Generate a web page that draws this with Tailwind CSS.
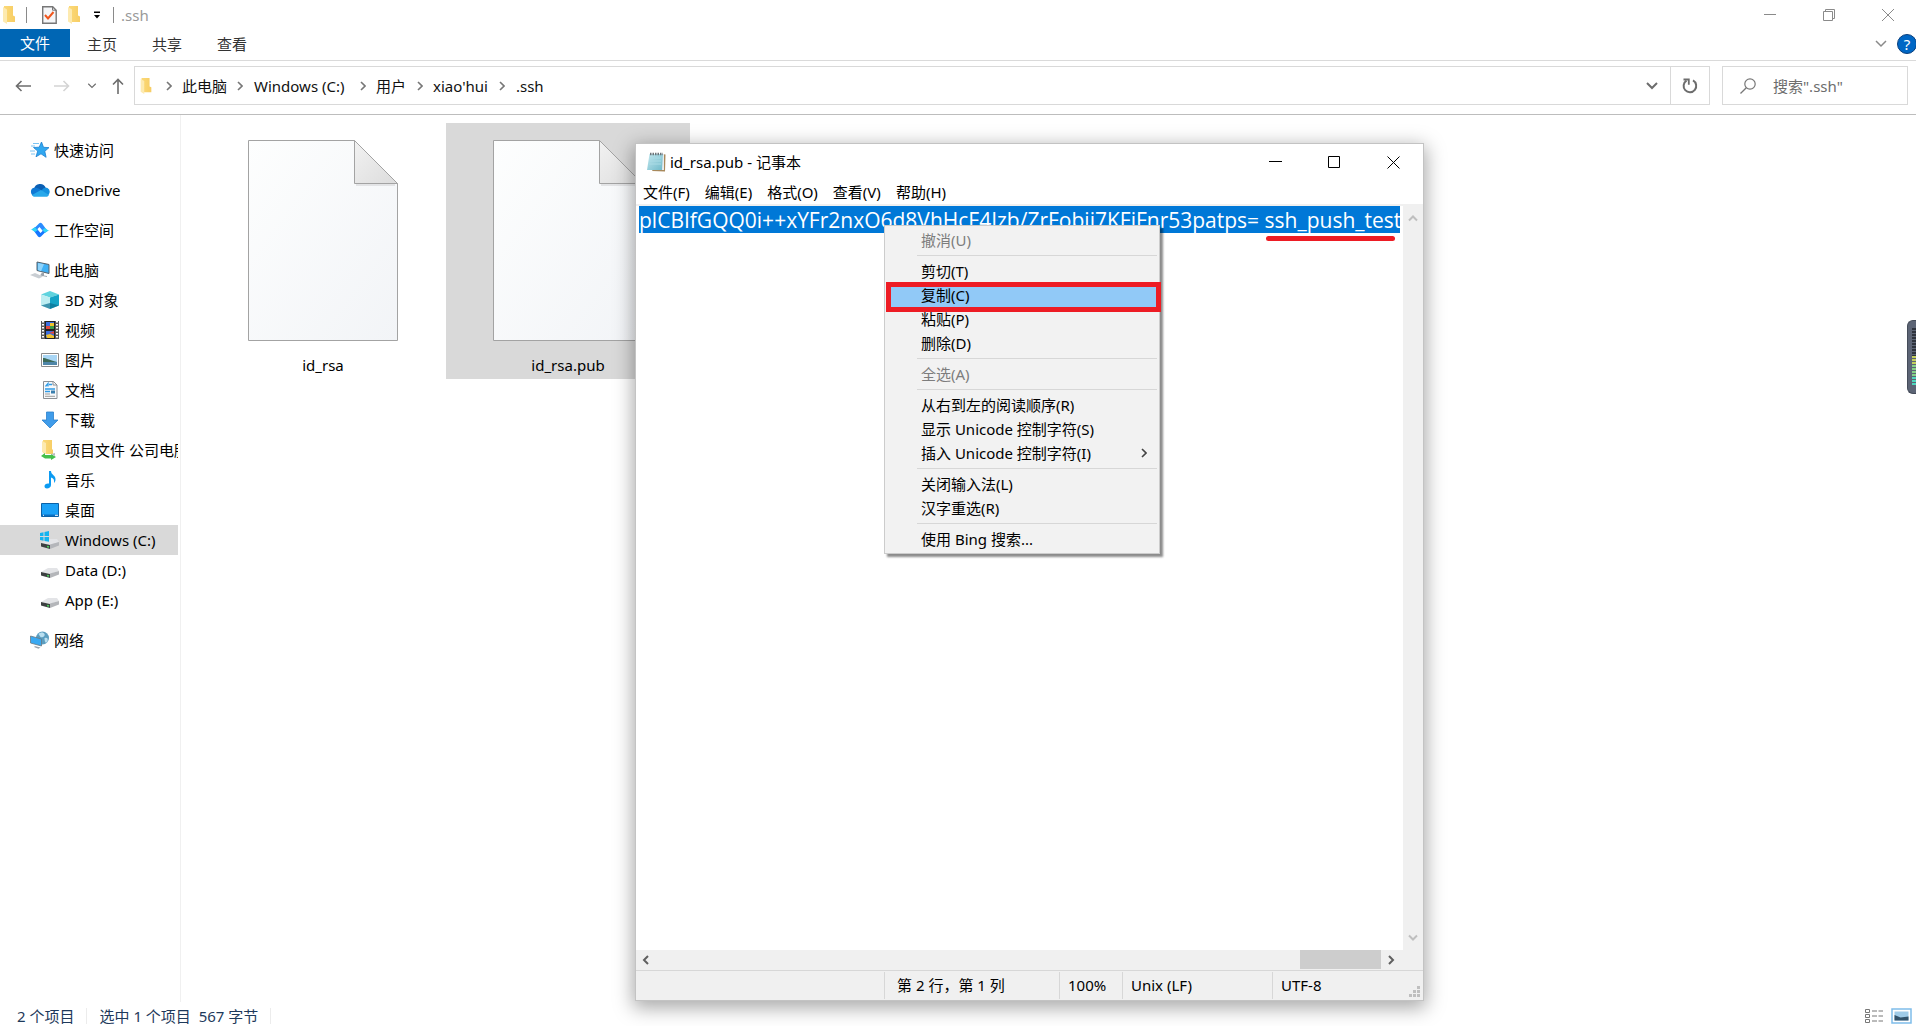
<!DOCTYPE html>
<html lang="zh-CN">
<head>
<meta charset="utf-8">
<meta name="viewport" content="width=device-width, initial-scale=1">
<title>.ssh</title>
<script src="https://cdn.jsdelivr.net/npm/@tailwindcss/browser@4"></script>
</head>
<body class="relative flex h-screen flex-col overflow-hidden bg-white font-['Noto_Sans','Noto_Sans_CJK_SC',sans-serif] text-[15px] leading-6 text-black">

<svg class="absolute size-0" aria-hidden="true">
  <defs>
    <linearGradient id="gFolder" x1="0" x2="1"><stop offset="0" stop-color="#fbd978"/><stop offset="1" stop-color="#f7cd64"/></linearGradient>
    <linearGradient id="gPaper" x1="0" y1="0" x2="1" y2="1"><stop offset="0" stop-color="#fdfefe"/><stop offset="1" stop-color="#f2f4f7"/></linearGradient>
    <linearGradient id="gFold" x1="0" y1="0" x2="1" y2="1"><stop offset="0" stop-color="#f2f2f2"/><stop offset="1" stop-color="#dcdcdc"/></linearGradient>
    <linearGradient id="gPad" x1="0" y1="0" x2="1" y2="1"><stop offset="0" stop-color="#c3e8ef"/><stop offset="1" stop-color="#6fb9c9"/></linearGradient>
    <symbol id="folder" viewBox="0 0 12 18"><path d="M1 0h9v9.500l2 1V16H4L1 15z" fill="url(#gFolder)"/><path d="M0 1l4 2.500V18L0 15.500z" fill="#fdeab0"/></symbol>
    <symbol id="chev" viewBox="0 0 6 10"><path d="M1 1l4 4-4 4" fill="none" stroke="currentColor" stroke-width="1.600"/></symbol>
    <symbol id="down" viewBox="0 0 12 8"><path d="M1 1l5 5 5-5" fill="none" stroke="currentColor" stroke-width="1.500"/></symbol>
    <symbol id="drive" viewBox="0 0 18 10"><path d="M0 4L7 0h9l2 3-9 3z" fill="#e3e4e7"/><path d="M9 5.500L18 3v3.500L9 10z" fill="#b4b6ba"/><path d="M0 4l9 2v4L0 7.500z" fill="#3c3f41"/><path d="M6 7.500l2 .5" stroke="#4cd05a" stroke-width="1.500"/></symbol>
    <symbol id="page" viewBox="0 0 150 201">
      <path d="M.5.500h106l43 43v157H.5z" fill="url(#gPaper)" stroke="#a3a3a3"/>
      <path d="M108 45h39" stroke="#e3e4e6" stroke-width="2"/>
      <path d="M106.500.500v43h43z" fill="url(#gFold)" stroke="#a3a3a3"/>
    </symbol>
  </defs>
</svg>

<!-- Title bar -->
<header class="flex h-[29px] shrink-0 items-center">
  <svg class="ml-[3px] h-[18px] w-3"><use href="#folder"/></svg>
  <span class="ml-[11px] h-4 w-px bg-[#8a8a8a]"></span>
  <button class="ml-[15px]" aria-label="属性">
    <svg class="h-[18px] w-[15px]" viewBox="0 0 15 18"><path d="M.7.700h10l3.500 3.500v13H.7z" fill="#f5f6f8" stroke="#777" stroke-width="1.400"/><path d="M10.500.700v3.500h3.500" fill="none" stroke="#777"/><path d="M3 9l3 3.500L11.500 6" fill="none" stroke="#f0561d" stroke-width="2"/></svg>
  </button>
  <button class="ml-[11px]" aria-label="新建文件夹"><svg class="h-[18px] w-3"><use href="#folder"/></svg></button>
  <button class="ml-[13px]" aria-label="自定义快速访问工具栏"><svg class="h-2 w-2" viewBox="0 0 8 8"><path d="M1 0.500h6v1.500H1zM1 4h6L4 7.500z"/></svg></button>
  <span class="ml-3 h-4 w-px bg-[#8a8a8a]"></span>
  <h1 class="ml-[7px] text-[#999]">.ssh</h1>
  <div class="ml-auto mr-[22px] flex items-center gap-[47px] text-[#8a8a8a]">
    <button aria-label="最小化"><svg class="size-3" viewBox="0 0 12 12"><path d="M0 5.500h12" stroke="currentColor"/></svg></button>
    <button aria-label="还原"><svg class="size-3" viewBox="0 0 12 12"><path d="M.5 2.500h9v9h-9zM2.500 2.500v-2h9v9h-2" fill="none" stroke="currentColor"/></svg></button>
    <button aria-label="关闭"><svg class="size-3" viewBox="0 0 12 12"><path d="M0 0l12 12M12 0L0 12" stroke="currentColor"/></svg></button>
  </div>
</header>

<!-- Ribbon tabs -->
<nav class="flex h-8 shrink-0 items-start border-b border-[#dadada] text-[#333]">
  <button class="h-7 w-[70px] bg-[#0066b4] text-white">文件</button>
  <button class="ml-[17px] h-[30px]">主页</button>
  <button class="ml-[35px] h-[30px]">共享</button>
  <button class="ml-[35px] h-[30px]">查看</button>
  <div class="-mr-px ml-auto flex h-[30px] items-center gap-2.5">
    <button class="text-[#8a8a8a]" aria-label="展开功能区"><svg class="h-2 w-3"><use href="#down"/></svg></button>
    <button class="size-5 rounded-full border border-[#0a3f7d] bg-[#0067c5] text-[15px] leading-[18px] text-white" aria-label="帮助">?</button>
  </div>
</nav>

<!-- Address row -->
<div class="flex h-[54px] shrink-0 items-start border-b border-[#bdbdbd] pr-2 pt-[5px]">
  <div class="flex h-[39px] w-[134px] shrink-0 items-center pl-[15px] text-[#6d6d6d]">
    <button aria-label="后退"><svg class="h-3 w-4" viewBox="0 0 16 12"><path d="M6.500 1L1.500 6l5 5M1.500 6H16" fill="none" stroke="currentColor" stroke-width="1.600"/></svg></button>
    <button class="ml-[23px] text-[#d4d4d4]" aria-label="前进"><svg class="h-3 w-4" viewBox="0 0 16 12"><path d="M9.500 1l5 5-5 5M14.500 6H0" fill="none" stroke="currentColor" stroke-width="1.600"/></svg></button>
    <button class="ml-[17px]" aria-label="最近位置"><svg class="h-1.5 w-2.5"><use href="#down"/></svg></button>
    <button class="ml-[15px]" aria-label="向上"><svg class="h-4 w-3" viewBox="0 0 12 16"><path d="M1 6.500L6 1.500l5 5M6 1.500V16" fill="none" stroke="currentColor" stroke-width="1.600"/></svg></button>
  </div>
  <div class="flex h-[39px] grow items-stretch border border-[#d9d9d9]">
    <nav class="flex grow items-center pl-[5px] text-[#111]" aria-label="路径">
      <svg class="h-4 w-3"><use href="#folder"/></svg>
      <svg class="ml-[14px] h-2.5 w-1.5 text-[#777]"><use href="#chev"/></svg>
      <a href="#pc" class="ml-[10px]">此电脑</a>
      <svg class="ml-[10px] h-2.5 w-1.5 text-[#777]"><use href="#chev"/></svg>
      <a href="#c" class="ml-[11px] w-[95px]">Windows (C:)</a>
      <svg class="ml-[11px] h-2.5 w-1.5 text-[#777]"><use href="#chev"/></svg>
      <a href="#users" class="ml-[10px]">用户</a>
      <svg class="ml-[11px] h-2.5 w-1.5 text-[#777]"><use href="#chev"/></svg>
      <a href="#home" class="ml-[10px]">xiao'hui</a>
      <svg class="ml-[11px] h-2.5 w-1.5 text-[#777]"><use href="#chev"/></svg>
      <a href="#ssh" class="ml-[11px]">.ssh</a>
    </nav>
    <button class="px-3 text-[#6d6d6d]" aria-label="以前的位置"><svg class="h-2 w-3" viewBox="0 0 12 8"><path d="M1 1l5 5 5-5" fill="none" stroke="currentColor" stroke-width="2"/></svg></button>
    <button class="flex w-[39px] items-center justify-center border-l border-[#d9d9d9] text-[#6d6d6d]" aria-label="刷新"><svg class="h-4 w-4" viewBox="0 0 16 16"><path d="M4.500 2.600a6.300 6.300 0 1 0 6.500-.2" fill="none" stroke="currentColor" stroke-width="2"/><path d="M1.500 1.500h5.300v5.300" fill="none" stroke="currentColor" stroke-width="1.800"/></svg></button>
  </div>
  <label class="ml-3 flex h-[39px] w-[186px] shrink-0 items-center border border-[#d9d9d9] pl-[17px]">
    <svg class="size-4 shrink-0" viewBox="0 0 16 16"><circle cx="10" cy="6" r="5.200" fill="none" stroke="#777" stroke-width="1.200"/><path d="M6.300 9.700L.500 15.500" stroke="#777" stroke-width="1.300"/></svg>
    <input type="search" aria-label="搜索" placeholder='搜索".ssh"' class="ml-[17px] w-full min-w-0 bg-transparent text-[15px] outline-none placeholder:text-[#6d6d6d]">
  </label>
</div>

<main class="flex min-h-0 grow">
  <!-- Navigation pane -->
  <nav class="flex w-[181px] shrink-0 flex-col gap-2.5 border-r border-[#f0f0f0] pr-0.5 pt-5" aria-label="导航窗格">
    <a href="#quick" class="flex h-[30px] items-center gap-1 pl-[30px]">
      <svg class="h-[18px] w-5" viewBox="0 0 20 18"><path d="M11.500 1l2 5.300 5.500.3-4.200 3.700 1.300 6-5.100-3.500-5 3 1.700-5.700L3.500 6.500l5.700-.3z" fill="#31a8f0" stroke="#1a7fd0" stroke-width=".8"/><path d="M3 2.500h6M1 5h4M0 10h5M1 13h4" stroke="#7cc4f2"/></svg>快速访问</a>
    <a href="#onedrive" class="flex h-[30px] items-center gap-1 pl-[30px]">
      <svg class="h-[14px] w-5" viewBox="0 0 20 14"><path d="M4 6a6.200 6.200 0 0 1 11.800-1.300L12 9z" fill="#0a5fb4"/><path d="M4 4.800C6 4.300 8 5 9.500 6L14 9l-3 4H4.500A4.200 4.200 0 0 1 4 4.800z" fill="#0f78d4"/><path d="M12 7c1-2 4-2.800 5.500-2A4.300 4.300 0 0 1 16 13h-5z" fill="#1490df"/><path d="M2 12l9-5 8 5c-.800 1.300-2 1.800-3 1.800H4.500C3.500 13.800 2.500 13 2 12z" fill="#28a8ea"/></svg>OneDrive</a>
    <a href="#workspace" class="flex h-[30px] items-center gap-1 pl-[30px]">
      <svg class="h-4 w-5" viewBox="0 0 19 16"><path d="M2 7l3-2 5 6 3-3 2 2-4.500 4.500c-1 1-2 1-3 0z" fill="#1677ff"/><path d="M17 9l-3 2-5-6-3 3-2-2L8.500 1.500c1-1 2-1 3 0z" fill="#2b8cff"/><path d="M0 7.500C2 7.500 3 5.500 4.500 5.200L7 8.300 4.500 10C3 9 1.500 7.500 0 7.500zM19 8.500c-2 0-3 2-4.500 2.300L12 7.700 14.500 6C16 7 17.500 8.500 19 8.500z" fill="#2fd4f7"/></svg>工作空间</a>
    <div>
      <a href="#pc" class="flex h-[30px] items-center gap-1 pl-[30px]">
        <svg class="h-[18px] w-5" viewBox="0 0 20 18"><path d="M7 1l12 2.500v9L7 9.500z" fill="#3fb0f5" stroke="#56616b"/><path d="M8 2l6 1.300-3 7L8 9z" fill="#8ed3fb"/><path d="M12 11.500l2 .5v2.500l3 .5v1l-7-1.500z" fill="#9aa3ab"/><path d="M0 14l5-2 8 3.500-4 2z" fill="#c9ced3"/></svg>此电脑</a>
      <a href="#3d" class="flex h-[30px] items-center gap-1.5 pl-[41px]">
        <svg class="size-[18px]" viewBox="0 0 18 18"><path d="M0 3.500L9 0l9 3.500-9 3z" fill="#5fd3de"/><path d="M0 3.500l9 3V18l-9-3.500z" fill="#bdeef2"/><path d="M18 3.500l-9 3V18l9-3.500z" fill="#14a4c6"/><path d="M0 14.500l9-2.500 9 2.500L9 18z" fill="#0a6f92" fill-opacity=".7"/></svg>3D 对象</a>
      <a href="#videos" class="flex h-[30px] items-center gap-1.5 pl-[41px]">
        <svg class="size-[18px]" viewBox="0 0 18 18"><path d="M0 0h18v18H0z" fill="#5a5a5a"/><path d="M2 0v18M16 0v18" stroke="#fff" stroke-width="2" stroke-dasharray="1.500 1.500"/><path d="M4 0h10v18H4z" fill="#222"/><path d="M5 1h8v7H5zM5 10h8v7H5z" fill="#3c6fe0"/><path d="M5 5h4v3H5zM8 12l5-2v3z" fill="#e2483f"/><path d="M9 2h4v3H9zM5 14l4-1 4 2v2H6z" fill="#f2c32e"/><path d="M9 5h4v3H9z" fill="#3c9b4b"/></svg>视频</a>
      <a href="#pictures" class="flex h-[30px] items-center gap-1.5 pl-[41px]">
        <svg class="h-[14px] w-[18px]" viewBox="0 0 18 14"><path d="M.5.500h17v13H.5z" fill="#fff" stroke="#8b8b8b"/><path d="M2 2h14v10H2z" fill="#a9d6f5"/><path d="M2 5c3 0 6 2 14 4v1H2z" fill="#3d6a58"/><path d="M2 9h14v3H2z" fill="#4f86a8"/></svg>图片</a>
      <a href="#documents" class="flex h-[30px] items-center gap-1.5 pl-[41px]">
        <svg class="size-[18px]" viewBox="0 0 18 18"><path d="M2.500.500h10l3.500 3.500v13.500H2.500z" fill="#f7f9fb" stroke="#8a8f94"/><path d="M12 .5V4h4" fill="none" stroke="#8a8f94"/><path d="M4.500 5.500L7 2.500v3M8 3.500h3M4 8h10M4 10.500h5" stroke="#2f9be6" stroke-width="1.300" fill="none"/><path d="M10 9.500h4v3h-4z" fill="#3a7fae"/><path d="M4 13h5M4 15.300h10" stroke="#9b9b9b"/></svg>文档</a>
      <a href="#downloads" class="flex h-[30px] items-center gap-1.5 pl-[41px]">
        <svg class="size-[18px]" viewBox="0 0 18 18"><path d="M5.500 1h7v8H17l-8 8-8-8h4.500z" fill="#3f9cea" stroke="#2c80cc" stroke-width=".8"/></svg>下载</a>
      <a href="#project" class="flex h-[30px] items-center gap-1.5 overflow-hidden pl-[41px] whitespace-nowrap">
        <svg class="h-5 w-[18px] shrink-0" viewBox="0 0 18 20"><path d="M2 0h9v9l1 1v4H5l-3-1z" fill="url(#gFolder)"/><path d="M1 1l4 2v11l-4-2z" fill="#fdeab0"/><path d="M0 16l4-3v2h6v-1l5 3-5 3v-1.500H4z" fill="#45c04c"/><path d="M10 14l4-1v3z" fill="#b8bcc0"/></svg>项目文件 公司电脑</a>
      <a href="#music" class="flex h-[30px] items-center gap-1.5 pl-[41px]">
        <svg class="size-[18px]" viewBox="0 0 18 18"><path d="M8 0h2c0 4 5 4 4.500 9-.2 1.500-1 2.500-1.500 3 .5-3-.5-5-3-5.500V14c0 2-2 3.500-4 3.500S3.500 16.500 3.500 15 5.500 12 8 12.500z" fill="#0c9bf2"/></svg>音乐</a>
      <a href="#desktop" class="flex h-[30px] items-center gap-1.5 pl-[41px]">
        <svg class="h-[14px] w-[18px]" viewBox="0 0 18 14"><path d="M.5.500h17v13H.5z" fill="#1ba1f7" stroke="#0b62a8"/><path d="M1 11.500h16V13H1z" fill="#0b6fc2"/><path d="M2 12.300h1M14 12.300h3" stroke="#fff"/></svg>桌面</a>
      <a href="#c" class="flex h-[30px] items-center gap-1.5 bg-[#d9d9d9] pl-10" aria-current="true">
        <svg class="h-[18px] w-[19px] shrink-0" viewBox="0 0 19 18"><svg x="1" y="8" width="18" height="10" viewBox="0 0 18 10"><use href="#drive"/></svg><path d="M0 2l3.500-.7V5H0zM4.500 1L9 0v5H4.500zM0 6h3.500v3.700L0 9zM4.500 6H9v4.700L4.500 10z" fill="#14b4f0"/></svg>Windows (C:)</a>
      <a href="#d" class="flex h-[30px] items-center gap-1.5 pl-[41px]"><svg class="mt-1.5 h-2.5 w-[18px]"><use href="#drive"/></svg>Data (D:)</a>
      <a href="#e" class="flex h-[30px] items-center gap-1.5 pl-[41px]"><svg class="mt-1.5 h-2.5 w-[18px]"><use href="#drive"/></svg>App (E:)</a>
    </div>
    <a href="#network" class="flex h-[30px] items-center gap-1 pl-[30px]">
      <svg class="h-[18px] w-5" viewBox="0 0 19 18"><circle cx="12" cy="7" r="6.500" fill="#5b9dbf"/><path d="M8 3c2-2 5-2 6 0s-2 4-4 3zM14 7c2-1 4 0 3 3s-3 2-3-3z" fill="#b9dff0"/><path d="M0 5l11 3v7L0 12z" fill="#39a9f2" stroke="#6a7882" stroke-width=".8"/><path d="M4 15l6 1.500-2 1.300-4-1.500z" fill="#9aa3ab"/></svg>网络</a>
  </nav>

  <!-- Files -->
  <section class="flex grow items-start gap-px pl-5 pt-2" aria-label="文件">
    <button class="flex h-64 w-[244px] flex-col items-center pt-[17px]">
      <svg class="h-[201px] w-[150px]"><use href="#page"/></svg>
      <span class="mt-3">id_rsa</span>
    </button>
    <button class="flex h-64 w-[244px] flex-col items-center bg-[#d9d9d9] pt-[17px]" aria-pressed="true">
      <svg class="h-[201px] w-[150px]"><use href="#page"/></svg>
      <span class="mt-3">id_rsa.pub</span>
    </button>
  </section>
</main>

<footer class="flex h-6 shrink-0 items-center gap-3 pl-[17px] pt-[3px] text-[#1e395b]">
  <span>2 个项目</span>
  <span class="h-4 w-px bg-[#ececec]"></span>
  <span class="whitespace-pre">选中 1 个项目  567 字节</span>
  <span class="h-4 w-px bg-[#ececec]"></span>
  <div class="ml-auto flex items-center gap-2 pr-1">
    <button class="h-4" aria-label="详细信息"><svg class="h-4 w-[18px]" viewBox="0 0 18 16"><path d="M.5 1.500h4v3h-4zM.5 6.500h4v3h-4zM.5 11.500h4v3h-4z" fill="none" stroke="#777"/><path d="M7 3h5M13.500 3H18M7 8h5M13.500 8H18M7 13h5M13.500 13H18" stroke="#777"/></svg></button>
    <button class="h-4" aria-label="大图标"><svg class="h-4 w-[21px]" viewBox="0 0 21 16"><path d="M1 1h19v14H1z" fill="#fff" stroke="#7fbdea" stroke-width="1.500"/><path d="M3.500 3.500h14v9h-14z" fill="#9fcbe8"/><path d="M3.500 7l6 2.500 8-1v4h-14z" fill="#33536b"/></svg></button>
  </div>
</footer>

<!-- Notepad window -->
<section class="absolute left-[635px] top-[143px] flex h-[858px] w-[789px] flex-col border border-[#c3c3c3] bg-white shadow-[0_5px_18px_2px_rgba(0,0,0,0.34)]" aria-label="记事本">
  <header class="flex h-9 shrink-0 items-center pl-[10px]">
    <svg class="h-5 w-5" viewBox="0 0 20 20"><path d="M16 2l3.500.5-.5 17-13-.5z" fill="#a8895c"/><path d="M4 2h14v16H2z" fill="#e8ecee"/><path d="M3.500 2H17l-1 16H1z" fill="url(#gPad)"/><path d="M4 6h11M3.500 9H15M3 12h12" stroke="#a9dbe5"/><path d="M4 2h13" stroke="#6c7378" stroke-width="2.500" stroke-dasharray="1.500 1"/></svg>
    <h2 class="ml-1">id_rsa.pub - 记事本</h2>
    <div class="ml-auto mr-[23px] flex items-center gap-[46px]">
      <button aria-label="最小化"><svg class="size-[13px]" viewBox="0 0 13 13"><path d="M0 5.500h13" stroke="#000"/></svg></button>
      <button aria-label="最大化"><svg class="size-[13px]" viewBox="0 0 13 13"><path d="M.5.500h11v11H.5z" fill="none" stroke="#000"/></svg></button>
      <button aria-label="关闭"><svg class="size-[13px]" viewBox="0 0 13 13"><path d="M.5.500l12 12M12.500.500l-12 12" stroke="#000"/></svg></button>
    </div>
  </header>
  <nav class="flex h-[26px] shrink-0 items-end gap-[15px] border-b-2 border-[#f0f0f0] pl-[7px]">
    <button>文件(F)</button><button>编辑(E)</button><button>格式(O)</button><button>查看(V)</button><button>帮助(H)</button>
  </nav>
  <div class="flex min-h-0 grow">
    <div class="min-w-0 grow overflow-hidden pl-[3px]">
      <textarea rows="1" wrap="off" spellcheck="false" aria-label="文本编辑器" class="block h-[27px] w-[761px] resize-none overflow-hidden bg-[#0078d7] font-['Open_Sans',sans-serif] text-[21px] leading-[28px] text-white outline-none">plCBIfGQQ0i++xYFr2nxO6d8VhHcF4Izb/ZrFobii7KFiFnr53patps= ssh_push_test</textarea>
      <div class="ml-auto mr-2 mt-[3px] h-[5px] w-[129px] rounded-full bg-[#ed1c24]"></div>
    </div>
    <div class="flex w-5 shrink-0 flex-col items-center justify-between bg-[#f0f0f0] py-2 text-[#bfbfbf]">
      <button class="flex rotate-180" aria-label="向上滚动"><svg class="h-2 w-2.5" viewBox="0 0 10 8"><path d="M1 1.500l4 4 4-4" fill="none" stroke="currentColor" stroke-width="2"/></svg></button>
      <button class="flex" aria-label="向下滚动"><svg class="h-2 w-2.5" viewBox="0 0 10 8"><path d="M1 1.500l4 4 4-4" fill="none" stroke="currentColor" stroke-width="2"/></svg></button>
    </div>
  </div>
  <div class="flex h-5 shrink-0 items-center bg-[#f0f0f0] pl-1.5 pr-7 text-[#606060]">
    <button aria-label="向左滚动"><svg class="h-2.5 w-2" viewBox="0 0 8 10"><path d="M6 1L2 5l4 4" fill="none" stroke="currentColor" stroke-width="2"/></svg></button>
    <div class="ml-auto h-[19px] w-[81px] self-start bg-[#cdcdcd]"></div>
    <button class="ml-1.5" aria-label="向右滚动"><svg class="h-2.5 w-2" viewBox="0 0 8 10"><path d="M2 1l4 4-4 4" fill="none" stroke="currentColor" stroke-width="2"/></svg></button>
  </div>
  <footer class="relative flex h-[30px] shrink-0 items-stretch border-t border-[#d7d7d7] bg-[#f0f0f0] leading-[27px]">
    <span class="my-px grow"></span>
    <span class="my-px w-[175px] border-l border-[#d7d7d7] pl-3">第 2 行，第 1 列</span>
    <span class="my-px w-[63px] border-l border-[#d7d7d7] pl-2">100%</span>
    <span class="my-px w-[150px] border-l border-[#d7d7d7] pl-2">Unix (LF)</span>
    <span class="my-px w-[151px] border-l border-[#d7d7d7] pl-2">UTF-8</span>
    <svg class="absolute bottom-[3px] right-[3px] size-[11px]" viewBox="0 0 11 11"><path d="M8 0h3v3H8zM4 4h3v3H4zM8 4h3v3H8zM0 8h3v3H0zM4 8h3v3H4zM8 8h3v3H8z" fill="#bfbfbf"/></svg>
  </footer>
</section>

<!-- Context menu -->
<div role="menu" class="absolute left-[884px] top-[225px] flex w-[276px] flex-col border border-[#ccc] bg-[#f2f2f2] px-0.5 py-0.5 shadow-[3px_3px_2px_rgba(0,0,0,0.45)]">
  <button role="menuitem" disabled class="h-6 pl-[34px] text-left text-[#7d7d7d]">撤消(U)</button>
  <hr class="my-[3px] ml-[30px] border-[#d7d7d7]">
  <button role="menuitem" class="h-6 pl-[34px] text-left">剪切(T)</button>
  <button role="menuitem" class="h-6 bg-[#91c9f7] pl-[34px] text-left">复制(C)</button>
  <button role="menuitem" class="h-6 pl-[34px] text-left">粘贴(P)</button>
  <button role="menuitem" class="h-6 pl-[34px] text-left">删除(D)</button>
  <hr class="my-[3px] ml-[30px] border-[#d7d7d7]">
  <button role="menuitem" disabled class="h-6 pl-[34px] text-left text-[#7d7d7d]">全选(A)</button>
  <hr class="my-[3px] ml-[30px] border-[#d7d7d7]">
  <button role="menuitem" class="h-6 pl-[34px] text-left">从右到左的阅读顺序(R)</button>
  <button role="menuitem" class="h-6 pl-[34px] text-left">显示 Unicode 控制字符(S)</button>
  <button role="menuitem" class="flex h-6 items-center justify-between pl-[34px] pr-2.5 text-left">插入 Unicode 控制字符(I)<svg class="h-2.5 w-1.5 text-[#444]"><use href="#chev"/></svg></button>
  <hr class="my-[3px] ml-[30px] border-[#d7d7d7]">
  <button role="menuitem" class="h-6 pl-[34px] text-left">关闭输入法(L)</button>
  <button role="menuitem" class="h-6 pl-[34px] text-left">汉字重选(R)</button>
  <hr class="my-[3px] ml-[30px] border-[#d7d7d7]">
  <button role="menuitem" class="h-6 pl-[34px] text-left">使用 Bing 搜索...</button>
  <div class="pointer-events-none absolute left-px top-14 h-[30px] w-[275px] border-[5px] border-[#ed1c24]"></div>
</div>

<!-- Level meter docked to the screen edge -->
<aside class="absolute right-0 top-80 h-[74px] w-[9px] rounded-l-md border border-r-0 border-[#454c59] bg-[#5c6475] pl-1 pt-[7px]" aria-label="音量">
  <svg class="h-[58px] w-1" viewBox="0 0 4 58"><path d="M2 0v28" stroke="#2e333d" stroke-width="4" stroke-dasharray="2 1"/><path d="M2 28v9" stroke="#c3cf5d" stroke-width="4" stroke-dasharray="2 1"/><path d="M2 37v12" stroke="#86cf86" stroke-width="4" stroke-dasharray="2 1"/><path d="M2 49v9" stroke="#4fd6bd" stroke-width="4" stroke-dasharray="2 1"/></svg>
</aside>
</body>
</html>
